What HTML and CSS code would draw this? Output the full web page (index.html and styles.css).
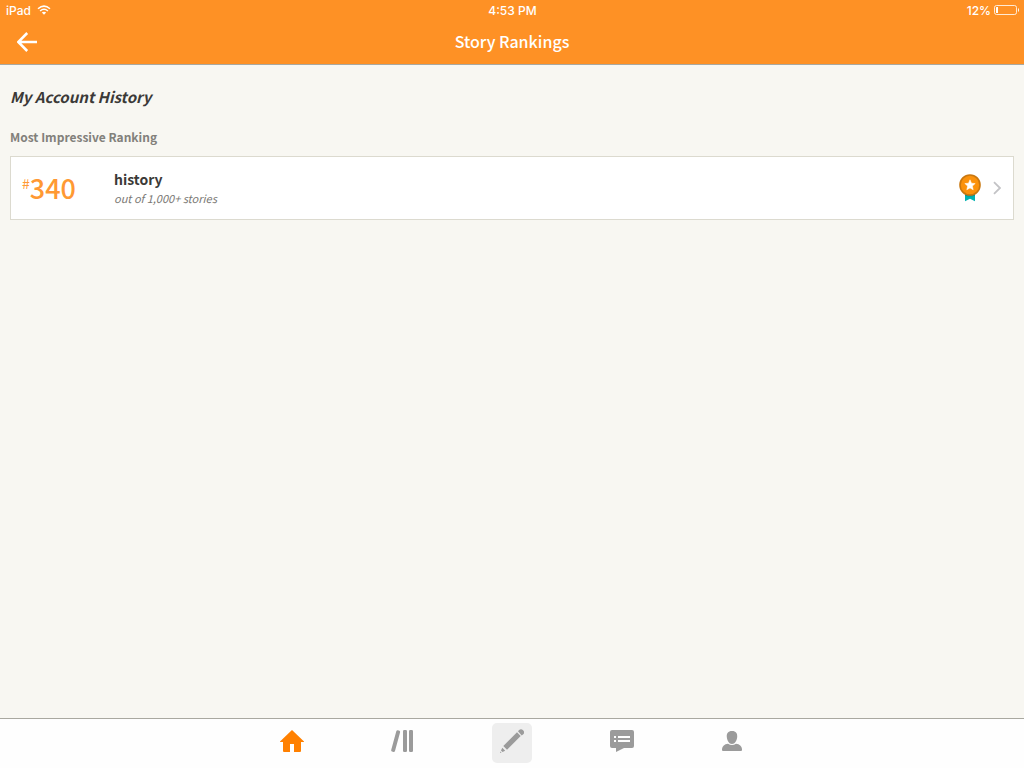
FILE: index.html
```html
<!DOCTYPE html>
<html lang="en">
<head>
<meta charset="utf-8">
<meta name="viewport" content="width=device-width, initial-scale=1">
<title>Story Rankings</title>
<link rel="stylesheet" href="styles.css">
</head>
<body>
<div class="app">
  <header class="header">
    <div class="status">
      <div class="status-left">
        <span>iPad</span>
        <svg class="wifi" viewBox="0 0 14 10" aria-hidden="true">
          <path d="M1 3.7Q7-1.5 13 3.7M3.1 6Q7 2.6 10.9 6" fill="none" stroke="#fff" stroke-width="1.5"/>
          <path d="M4.800 7.6Q7 5.8 9.200 7.6L7 9.800Z" fill="#fff"/>
        </svg>
      </div>
      <time class="status-time">4:53 PM</time>
      <div class="status-right">
        <span>12%</span>
        <svg class="battery" viewBox="0 0 25 10" aria-hidden="true">
          <rect x=".5" y=".5" width="22" height="9" rx="2" fill="none" stroke="#fff" stroke-opacity=".8"/>
          <path d="M2 2.5Q2 2 2.5 2H4V8H2.5Q2 8 2 7.500ZM24 3Q25 3.500 25 5T24 7Z" fill="#fff"/>
        </svg>
      </div>
    </div>
    <div class="navbar">
      <button class="back" type="button" aria-label="Back">
        <svg viewBox="0 0 20 20" aria-hidden="true"><path d="M10.200 1 1.300 10l8.900 9M1.500 10H20" fill="none" stroke="#fff" stroke-width="2.500"/></svg>
      </button>
      <h1 class="title">Story Rankings</h1>
    </div>
  </header>

  <main class="content">
    <h2 class="heading">My Account History</h2>
    <h3 class="subheading">Most Impressive Ranking</h3>
    <a class="card" href="#history">
      <span class="rank"><span class="hash">#</span>340</span>
      <span class="info">
        <span class="tag">history</span>
        <span class="detail">out of 1,000+ stories</span>
      </span>
      <svg class="medal" viewBox="0 0 22 28" aria-hidden="true">
        <path d="M6 18h10v9.300l-5-2.600-5 2.600z" fill="#00b2b2"/>
        <path d="M6 18h10v3.500q-5 2-10 0z" fill="#008f92"/>
        <circle cx="11" cy="11" r="10" fill="#fb920c" stroke="#c9770f" stroke-width="1.600"/>
        <path d="m11 5.800 1.500 3.400 3.700.4-2.800 2.500.8 3.700-3.200-1.900-3.200 1.900.8-3.700-2.800-2.500 3.700-.4z" fill="#fff" stroke="#fff" stroke-width=".5"/>
      </svg>
      <svg class="chevron" viewBox="0 0 8 14" aria-hidden="true"><path d="m1 1.200 6 5.800-6 5.800" fill="none" stroke="#c3c3c6" stroke-width="1.800"/></svg>
    </a>
  </main>

  <nav class="tabs" aria-label="Main">
    <button class="tab tab-active" type="button" aria-label="Home">
      <svg viewBox="0 0 24 24" aria-hidden="true"><path d="M12 1 24 12.600V13H21V22q0 1-1 1H14V15H10V23H4q-1 0-1-1V13H0v-.4z"/></svg>
    </button>
    <button class="tab" type="button" aria-label="Library">
      <svg viewBox="0 0 24 24" aria-hidden="true"><path d="M6.300 2.200Q6.700 1 7.900 1.200L9.500 1.700Q10.400 2.200 10.100 3.200L5 22Q4.600 23.200 3.500 23L2 22.600Q.9 22.200 1.200 21z"/><rect x="13" y="1" width="4" height="22" rx="1.200"/><rect x="19" y="1" width="4" height="22" rx="1.200"/></svg>
    </button>
    <button class="tab" type="button" aria-label="Write">
      <span class="tile"><svg viewBox="0 0 24 24" aria-hidden="true"><path d="M17 3.300 20.700 7 7 20.700 3.300 17zM18 2.300l1.100-1.200q2-1.700 4 .2t.2 4L21.700 6.500zM2.300 18.800 5.200 21.700 2.500 23 1 21.500zM.4 22.400l1.200 1.200-1.600.4z"/></svg></span>
    </button>
    <button class="tab" type="button" aria-label="Messages">
      <svg viewBox="0 0 24 24" aria-hidden="true"><path fill-rule="evenodd" d="M2 1H22q2 0 2 2V17q0 2-2 2H14L6 23V19H2q-2 0-2-2V3Q0 1 2 1zM4 7v2h2V7zm4 0v2h12V7zM4 11v2h2v-2zm4 0v2h12v-2z"/></svg>
    </button>
    <button class="tab" type="button" aria-label="Profile">
      <svg viewBox="0 0 24 24" aria-hidden="true"><path d="M12 2c4 0 5.500 2.500 5.200 6S15 15 12 15 7.100 11.500 6.800 8 8 2 12 2zM8 14.800q4 2.500 8 0 5.500.7 6 5.200v1q0 1-1 1H3q-1 0-1-1v-1q.5-4.500 6-5.200z"/></svg>
    </button>
  </nav>
</div>
</body>
</html>
```

FILE: styles.css
```css
* { box-sizing: border-box; }

body {
  margin: 0;
  background: #f8f7f2;
  color: #3b3937;
  font-family: "Noto Sans CJK SC", "Open Sans", sans-serif;
}

h1, h2, h3 { margin: 0; }

button {
  padding: 0;
  border: 0;
  background: none;
  cursor: pointer;
}

svg { display: block; }

.app {
  display: flex;
  flex-direction: column;
  min-height: 100vh;
}

.header {
  background: #fe9125;
  border-bottom: 1px solid #a9a8a0;
  color: #fff;
}

.status {
  display: grid;
  grid-template-columns: 1fr auto 1fr;
  align-items: center;
  height: 20px;
  padding: 1px 5px 0 6px;
  font: 500 12px/20px Inter, "Liberation Sans", sans-serif;
}

.status-left,
.status-right {
  display: flex;
  align-items: center;
}

.status-left { gap: 6px; }
.status-right { gap: 3px; justify-content: flex-end; }
.wifi,
.battery { height: 10px; margin-bottom: 2px; }
.wifi { width: 14px; }
.battery { width: 25px; }

.navbar {
  display: grid;
  grid-template-columns: 1fr auto 1fr;
  align-items: center;
  height: 44px;
  padding: 0 17px;
}

.back { justify-self: start; }
.back svg { width: 20px; height: 20px; }

.title {
  padding-bottom: 2px;
  font-size: 16px;
  font-weight: 500;
  line-height: 24px;
}

.content {
  flex: 1;
  padding: 20px 10px;
}

.heading {
  font-size: 15px;
  font-style: italic;
  font-weight: 700;
  line-height: 24px;
}

.subheading {
  margin: 18px 0 9px;
  color: #82807b;
  font-size: 12px;
  font-weight: 700;
  line-height: 20px;
}

.card {
  display: flex;
  align-items: center;
  min-height: 64px;
  padding: 0 12px 0 11px;
  border: 1px solid #dcdacf;
  background: #fff;
  color: inherit;
  text-decoration: none;
}

.rank {
  display: flex;
  width: 92px;
  color: #ff9933;
  font-size: 27px;
  font-weight: 500;
  line-height: 32px;
}

.hash {
  font-size: 14px;
  font-weight: 400;
  line-height: 22px;
}

.info {
  display: flex;
  flex: 1;
  flex-direction: column;
}

.tag {
  font-size: 14px;
  font-weight: 700;
  line-height: 19px;
}

.detail {
  color: #7a7874;
  font-size: 11px;
  font-style: italic;
  font-weight: 400;
  line-height: 18px;
}

.medal { width: 22px; height: 28px; margin-right: 12px; }
.chevron { width: 8px; height: 14px; }

.tabs {
  display: flex;
  justify-content: center;
  height: 50px;
  border-top: 1px solid #a9a8a0;
  background: #fefefe;
}

.tab {
  display: flex;
  justify-content: center;
  align-items: center;
  width: 110px;
  height: 44px;
  color: #9b9b9b;
}

.tab-active { color: #ff8000; }
.tab svg { width: 24px; height: 24px; fill: currentColor; }

.tile {
  display: flex;
  flex: none;
  justify-content: center;
  width: 40px;
  height: 40px;
  margin-top: 4px;
  padding-top: 6px;
  border-radius: 5px;
  background: #eeeeee;
}
```
